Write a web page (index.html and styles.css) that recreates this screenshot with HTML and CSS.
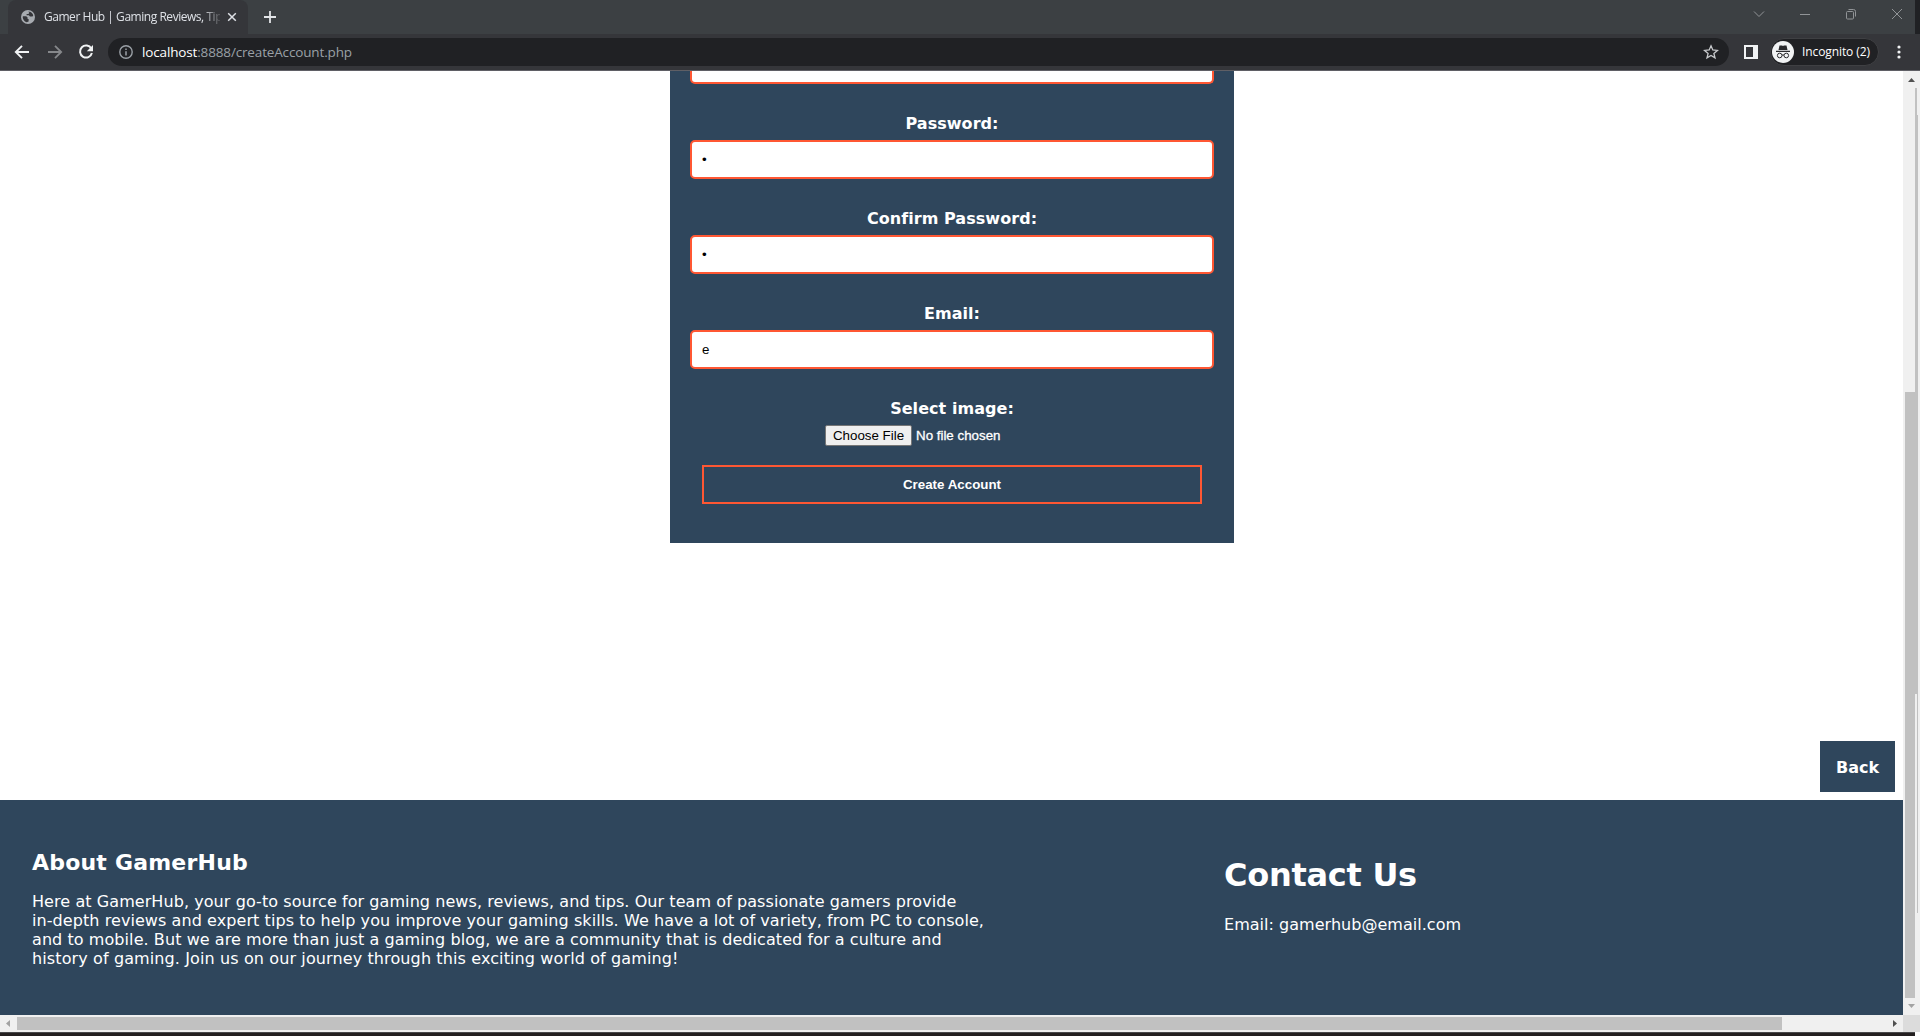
FILE: index.html
```html
<!DOCTYPE html>
<html lang="en">
<head>
<meta charset="utf-8">
<title>Gamer Hub | Gaming Reviews, Tips</title>
<link rel="stylesheet" href="styles.css">
</head>
<body>
<div class="window">
  <div class="tabstrip">
    <div class="tab">
      <svg class="globe" width="14" height="14" viewBox="0 0 14 14"><circle cx="7" cy="7" r="7" fill="#a7abb0"/><path d="M2 6.2h3.2l1.4 1.2v1.5h1v2.7L5.6 12.200Q2 11 1.700 7zM7 1.700l1.300.8-.8 1.500H5.600v1.300h2.200l1.200 1.300h2.200l1-.5Q12 3 9 1.800z" fill="#35363a"/></svg>
      <span class="tab-title">Gamer Hub | Gaming Reviews, Tip</span>
      <svg class="tab-close" width="10" height="10" viewBox="0 0 10 10"><path d="M1.200 1.200l7.600 7.600M8.800 1.200L1.200 8.800" stroke="#dee1e6" stroke-width="1.500"/></svg>
    </div>
    <svg class="new-tab" width="12" height="12" viewBox="0 0 12 12"><path d="M6 0v12M0 6h12" stroke="#e3e5e8" stroke-width="1.800"/></svg>
    <div class="controls">
      <svg width="12" height="12" viewBox="0 0 12 12"><path d="M1 3.500l5 5 5-5"/></svg>
      <svg width="12" height="12" viewBox="0 0 12 12"><path d="M1 6.500h10"/></svg>
      <svg width="12" height="12" viewBox="0 0 12 12"><rect x="1.500" y="3.500" width="7" height="7.500" rx="1"/><path d="M3.500 1.500h5q2 0 2 2v5"/></svg>
      <svg width="12" height="12" viewBox="0 0 12 12"><path d="M1 1l10 10M11 1L1 11"/></svg>
    </div>
    <div class="strip-end"></div>
  </div>
  <div class="toolbar">
    <svg class="back" width="16" height="16" viewBox="0 0 16 16"><path d="M15 8H2M8 1.800L1.800 8 8 14.200" fill="none" stroke="#f1f3f4" stroke-width="1.900"/></svg>
    <svg class="forward" width="16" height="16" viewBox="0 0 16 16"><path d="M1 8h12.500M8 1.800L14.200 8 8 14.200" fill="none" stroke="#86888b" stroke-width="1.800"/></svg>
    <svg class="reload" width="16" height="16" viewBox="0 0 16 16"><path d="M13.300 4.600A6 6 0 1 0 13.900 9" fill="none" stroke="#f1f3f4" stroke-width="2"/><path d="M15 1v6.200H8.800z" fill="#f1f3f4"/></svg>
    <div class="omnibox">
      <svg width="14" height="14" viewBox="0 0 14 14"><circle cx="7" cy="7" r="6.200" fill="none" stroke="#9aa0a6" stroke-width="1.400"/><path d="M7 6.200v4.200M7 3.500v1.500" stroke="#9aa0a6" stroke-width="1.500"/></svg>
      <span class="url"><b>localhost</b>:8888/createAccount.php</span>
      <svg class="star" width="16" height="16" viewBox="0 0 16 16"><path d="M8 1.800l1.800 4.200 4.600.4-3.500 3 1.100 4.500L8 11.500l-4 2.400 1.100-4.500-3.500-3 4.600-.4z" fill="none" stroke="#c8cacd" stroke-width="1.300"/></svg>
    </div>
    <svg class="panel" width="14" height="14" viewBox="0 0 14 14"><path fill="#f1f3f4" fill-rule="evenodd" d="M0 0h14v14H0zM2 2v10h7V2z"/></svg>
    <div class="incognito">
      <svg width="22" height="22" viewBox="0 0 22 22"><circle cx="11" cy="11" r="11" fill="#f1f3f4"/><path d="M7.500 4.500h2.500l1 .5 1-.5h2.500L15.500 9h-9zM4 9.800h14v1.200H4z" fill="#292a2d"/><g fill="none" stroke="#292a2d"><circle cx="7.700" cy="14.500" r="2.300"/><circle cx="14.300" cy="14.500" r="2.300"/><path d="M10 14.200q1-.7 2 0"/></g></svg>
      <span>Incognito (2)</span>
    </div>
    <svg class="dots" width="4" height="14" viewBox="0 0 4 14" fill="#f1f3f4"><circle cx="2" cy="2" r="1.600"/><circle cx="2" cy="7" r="1.600"/><circle cx="2" cy="12" r="1.600"/></svg>
  </div>
  <div class="viewport">
    <main class="page">
      <form class="signup">
        <div class="field field-cut"></div>
        <label>Password:</label>
        <div class="field">•</div>
        <label>Confirm Password:</label>
        <div class="field">•</div>
        <label>Email:</label>
        <div class="field">e</div>
        <label>Select image:</label>
        <div class="file"><span class="choose">Choose File</span><span class="chosen">No file chosen</span></div>
        <div class="submit">Create Account</div>
      </form>
      <div class="back-link"><span>Back</span></div>
      <footer>
        <section class="about">
          <h2>About GamerHub</h2>
          <p>Here at GamerHub, your go-to source for gaming news, reviews, and tips. Our team of passionate gamers provide<br>in-depth reviews and expert tips to help you improve your gaming skills. We have a lot of variety, from PC to console,<br>and to mobile. But we are more than just a gaming blog, we are a community that is dedicated for a culture and<br><span class="last-line">history of gaming. Join us on our journey through this exciting world of gaming!</span></p>
        </section>
        <section class="contact">
          <h1>Contact Us</h1>
          <p>Email: gamerhub@email.com</p>
        </section>
      </footer>
    </main>
    <div class="vbar">
      <svg width="17" height="17" viewBox="0 0 17 17"><path d="M5 11l3.500-4 3.500 4z" fill="#505050"/></svg>
      <div class="vtrack">
        <div class="vthumb"></div>
        <div class="edge"><div class="edge-top"></div><div class="edge-mid"></div><div class="edge-low"></div></div>
      </div>
      <svg width="17" height="17" viewBox="0 0 17 17"><path d="M5 6l3.500 4L12 6z" fill="#a3a3a3"/></svg>
    </div>
    <div class="hbar">
      <svg width="17" height="17" viewBox="0 0 17 17"><path d="M10 5L6 8.500l4 3.500z" fill="#a3a3a3"/></svg>
      <div class="hthumb"></div>
      <svg class="right" width="17" height="17" viewBox="0 0 17 17"><path d="M7 5l4 3.500L7 12z" fill="#505050"/></svg>
    </div>
    <div class="corner"></div>
  </div>
  <div class="bottom"><div class="bottom-bar"></div></div>
</div>
</body>
</html>
```
FILE: styles.css
```css
* { box-sizing: border-box; }
body { margin: 0; font: 16px/19px "DejaVu Sans", sans-serif; color: #fff; background: #fff; }
svg { display: block; flex: none; }
h1, h2, p { margin: 0; white-space: nowrap; }
.window { width: 1920px; height: 1036px; overflow: hidden; display: flex; flex-direction: column; }

.tabstrip { height: 34px; flex: none; background: #3c4043; display: flex; }
.tab { width: 240px; height: 34px; margin-left: 8px; padding: 0 11px 0 13px; border-radius: 8px 8px 0 0; background: #35363a; display: flex; align-items: center; }
.tab-title { width: 176px; margin-left: 9px; flex: none; white-space: nowrap; font: 12px/18px "Open Sans", sans-serif; letter-spacing: -0.46px; color: #dee1e6; -webkit-mask-image: linear-gradient(90deg, #000 90%, transparent 102%); mask-image: linear-gradient(90deg, #000 90%, transparent 102%); }
.tab-close { margin-left: 7px; }
.new-tab { margin: 11px 0 0 16px; }
.controls { margin: 8px 12px 0 auto; display: flex; gap: 34px; fill: none; stroke: #919497; stroke-width: 1; }
.strip-end { width: 5px; background: #202124; }

.toolbar { height: 37px; flex: none; background: #35363a; border-bottom: 1px solid #5f5f65; display: flex; align-items: center; font: 14px/20px "Open Sans", sans-serif; }
.back { margin-left: 14px; }
.forward { margin-left: 17px; }
.reload { margin-left: 15px; }
.omnibox { width: 1621px; height: 28px; margin-left: 14px; padding: 0 10px 0 11px; border-radius: 14px; background: #202124; display: flex; align-items: center; }
.url { margin-left: 9px; color: #9aa0a6; font-size: 13.500px; letter-spacing: -0.15px; }
.url b { font-weight: 400; color: #fff; }
.star { margin-left: auto; }
.panel { margin-left: 15px; }
.incognito { width: 109px; height: 28px; margin-left: 12px; padding-left: 1px; border: 1px solid #3f4043; border-radius: 14px; background: #202124; display: flex; align-items: center; gap: 8px; font-size: 12px; letter-spacing: -0.1px; white-space: nowrap; }
.dots { margin-left: 18px; }

.viewport { height: 961px; flex: none; display: grid; grid-template: 944px 17px / 1903px 17px; }
.page { height: 944px; overflow: hidden; background: #fff; display: flex; flex-direction: column; }
.signup { width: 564px; height: 472px; margin-left: 670px; padding: 0 20px; background: #2f465c; display: flex; flex-direction: column; flex: none; }
.field { height: 39px; margin-bottom: 30px; padding: 0 10px; border: 2px solid #ff5733; border-radius: 5px; background: #fff; color: #000; font: 13.333px/35px "Liberation Sans", Arial, sans-serif; flex: none; }
.field-cut { height: 13px; border-top: 0; border-radius: 0 0 5px 5px; }
label { height: 19px; margin-bottom: 7px; font-weight: 700; letter-spacing: 0.05px; text-align: center; white-space: nowrap; }
.file { height: 21px; margin: 0 0 19px 135px; display: flex; font: 13.333px/21px "Liberation Sans", Arial, sans-serif; }
.choose { width: 87px; height: 21px; margin-right: 4px; border: 1px solid #767676; border-radius: 2px; background: #efefef; color: #000; line-height: 19px; text-align: center; white-space: nowrap; flex: none; }
.chosen { white-space: nowrap; -webkit-text-stroke: 0.3px #fff; }
.submit { height: 39px; margin: 0 12px; border: 2px solid #ff5733; font: 700 13.333px/35px "Liberation Sans", Arial, sans-serif; text-align: center; }
.back-link { width: 75px; height: 51px; margin: 198px 8px 8px auto; background: #2f465c; font-weight: 700; line-height: 53px; text-align: center; }
footer { height: 215px; background: #2f465c; display: flex; flex: none; }
.about { width: 1192px; padding: 47px 0 0 32px; }
.about h2 { margin-bottom: 13px; font-size: 22px; line-height: 32px; letter-spacing: 0.2px; }
.about p { letter-spacing: 0.073px; }
.about .last-line { letter-spacing: 0.115px; }
.contact { padding: 56px 0 0 32px; }
.contact h1 { margin-bottom: 20px; font-size: 32px; line-height: 39px; letter-spacing: -0.27px; }
.contact p { letter-spacing: 0.03px; }

.vbar { background: #f0f0f0; display: flex; flex-direction: column; }
.vtrack { flex: 1; display: flex; }
.vthumb { width: 10px; height: 606px; margin: 304px 0 0 2px; background: #c1c1c1; }
.edge { width: 3px; }
.edge-top { width: 2px; height: 27px; background: #c1c1c1; }
.edge-mid { height: 579px; background: #c1c1c1; }
.edge-low { width: 1px; height: 219px; margin-left: 2px; background: #c1c1c1; }
.hbar { background: #f0f0f0; display: flex; }
.hthumb { width: 1765px; height: 13px; margin-top: 2px; background: #c1c1c1; }
.right { margin-left: auto; }
.corner { background: #dcdcdc; }
.bottom { flex: 1; background: #fff; }
.bottom-bar { width: 1915px; height: 4px; border-top: 1px solid #48484a; background: #231f20; }
```
